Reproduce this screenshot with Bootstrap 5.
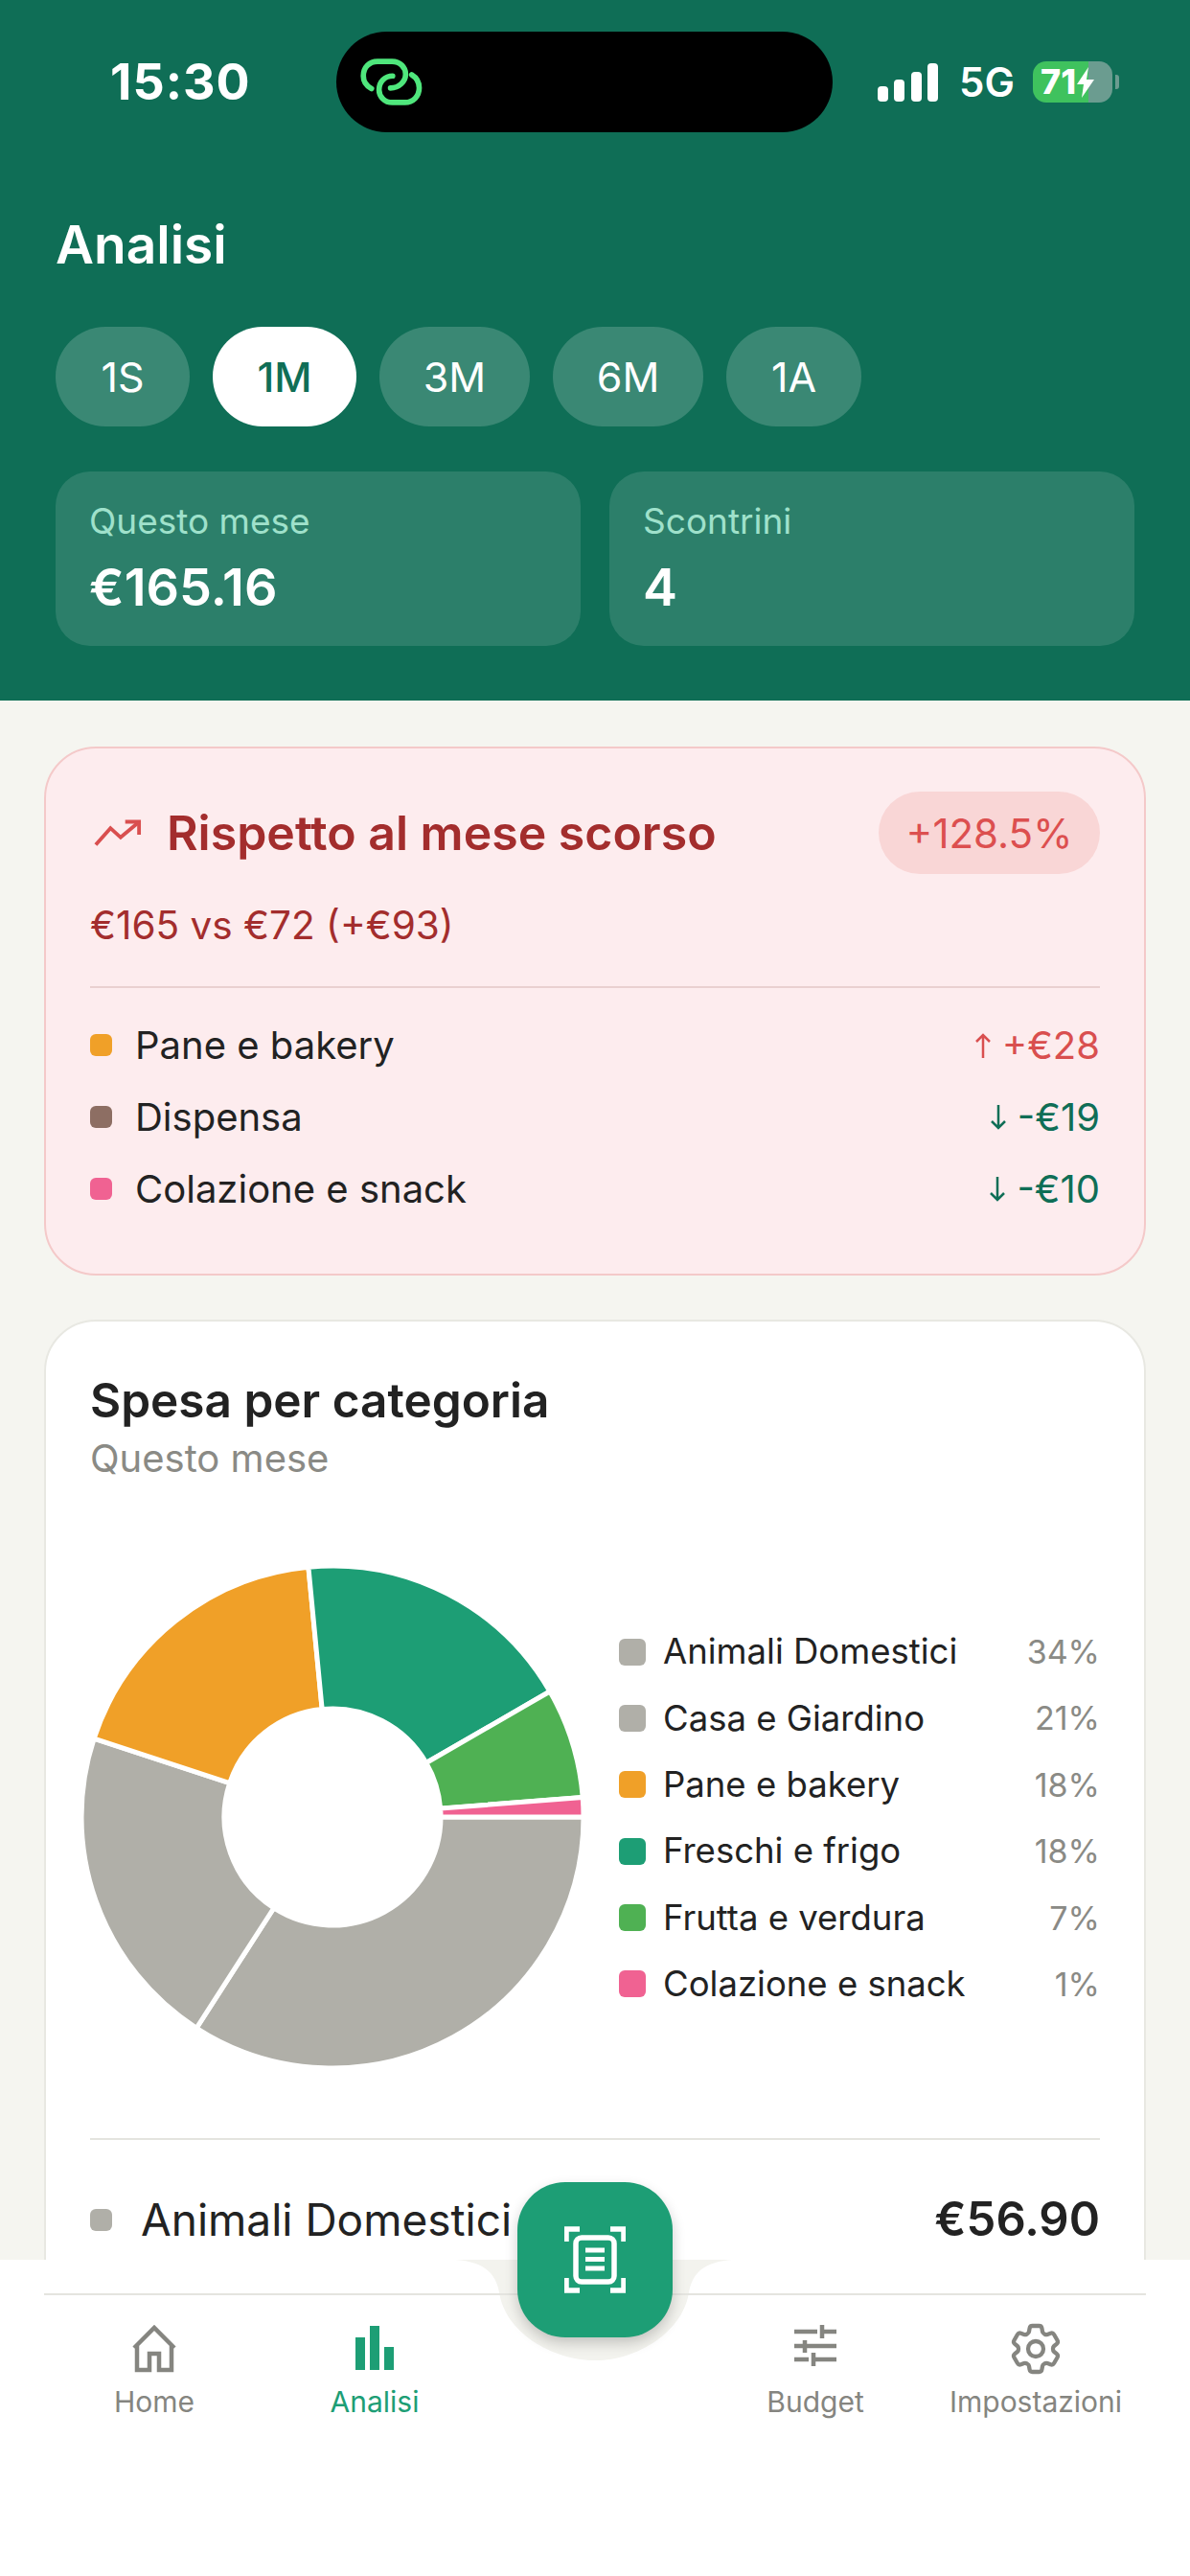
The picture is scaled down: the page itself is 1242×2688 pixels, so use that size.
<!DOCTYPE html>
<html lang="it">
<head>
  <meta charset="UTF-8">
  <meta name="viewport" content="width=device-width, initial-scale=1.0">
  <title>Analisi</title>
  <link href="https://cdn.jsdelivr.net/npm/bootstrap@5.3.0/dist/css/bootstrap.min.css" rel="stylesheet">
  <style>
    html, body { height: 2688px; overflow: hidden; }
    body { font-family: Inter, "Liberation Sans", sans-serif; background: #f5f5f0; color: #222; position: relative; }
    .app-head { background: #0f6e56; height: 731px; padding-top: 33px; color: #fff; }
    .status-row { height: 105px; padding-left: 115px; }
    .status-time { width: 236px; font-size: 52px; font-weight: 700; letter-spacing: 1px; line-height: 1; }
    .island { width: 518px; height: 105px; background: #000; border-radius: 53px; padding-left: 24px; }
    .status-right { padding-left: 47px; }
    .signal { height: 40px; width: 63px; }
    .net-label { font-size: 42px; font-weight: 600; line-height: 1; margin-left: 22px; width: 62px; }
    .battery { width: 83px; height: 43px; border-radius: 14px; margin-left: 15px; font-size: 36px; font-weight: 800; line-height: 43px; padding-left: 8px;
      background: linear-gradient(90deg, #3fc25e 70%, #6b9c90 70%); }
    .battery-nub { width: 4px; height: 15px; background: #6b9c90; border-radius: 0 3px 3px 0; margin-left: 3px; }
    .page-title { font-size: 55px; font-weight: 600; margin: 0; padding: 83px 0 0 58px; line-height: 68px; }
    .chip-row { padding: 52px 0 0 58px; gap: 24px; }
    .chip { height: 104px; border-radius: 52px; background: rgba(255,255,255,.18); color: #fff; font-size: 43px; font-weight: 400; border: 0; padding: 0; }
    .chip-on { background: #fff; color: #0f6e56; font-weight: 500; }
    .stat-row { padding: 47px 58px 0; gap: 30px; }
    .stat-box { flex: 1 1 0; height: 182px; background: rgba(255,255,255,.12); border-radius: 36px; padding: 30px 35px; }
    .stat-label { font-size: 37px; color: #9fe1cb; line-height: 44px; }
    .stat-value { font-size: 54px; font-weight: 600; line-height: 66px; margin-top: 14px; }
    .compare-box { margin: 48px 46px 0; height: 552px; background: #fdecee; border: 2px solid #f4c9c9; border-radius: 54px; padding: 45px 46px; }
    .compare-icon { margin-left: 4px; }
    .compare-title { font-size: 50px; font-weight: 600; color: #a32d2d; line-height: 86px; margin-left: 26px; }
    .compare-pill { height: 86px; width: 231px; border-radius: 43px; background: #f9d6d6; color: #dc4f4f; font-size: 42px; }
    .compare-sub { font-size: 40.500px; color: #a32d2d; line-height: 48px; margin-top: 30px; }
    .compare-rule { border-top: 2px solid #e9d0d0; margin-top: 39px; height: 24px; }
    .cat-row { height: 75px; font-size: 40px; color: #222; }
    .cat-dot { width: 23px; height: 23px; border-radius: 6px; margin-right: 24px; }
    .delta-up { color: #d94f4f; }
    .delta-down { color: #0f6e56; }
    .delta-arrow { margin-right: 12px; }
    .chart-box { margin: 46px 46px 0; background: #fff; border: 2px solid #e8e8e2; border-radius: 54px; padding: 51px 46px 0; height: 1400px; }
    .chart-title { font-size: 49.500px; font-weight: 600; line-height: 62px; margin: 0; }
    .chart-sub { font-size: 40px; color: #8a8a85; line-height: 46px; margin-top: 7px; }
    .donut-row { margin-top: 85px; height: 532px; }
    .donut-svg { width: 532px; height: 532px; margin-left: -13px; flex: none; }
    .legend-col { margin-left: 33px; flex: 1; padding-top: 2px; }
    .legend-row { height: 69.4px; font-size: 36.500px; }
    .legend-dot { width: 28px; height: 28px; border-radius: 6px; margin-right: 18px; }
    .legend-pct { color: #8a8a85; font-size: 34px; }
    .chart-rule { border-top: 2px solid #e4e4df; margin-top: 69px; }
    .top-cat { height: 166px; }
    .top-name { font-size: 46px; margin-left: 30px; }
    .top-amount { font-size: 49px; font-weight: 600; }
    .tab-shell { position: absolute; left: 0; right: 0; top: 2358px; height: 330px; background: #fff; }
    .tab-halo { position: absolute; left: 475px; top: 0; width: 290px; height: 105px; }
    .tab-list { position: absolute; left: 46px; right: 46px; top: 35px; border-top: 2px solid #e4e4df; display: grid; grid-template-columns: repeat(5, 1fr); }
    .tab-item { height: 130px; padding-top: 0; color: #858580; font-size: 30px; line-height: 1; }
    .tab-item svg { height: 64px; width: 64px; margin-top: 24px; margin-bottom: 8px; }
    .tab-on { color: #1d9e75; }
    .scan-btn { position: absolute; left: 540px; top: 2277px; width: 162px; height: 162px; border-radius: 50px; background: #1d9e75; box-shadow: 0 6px 14px rgba(0,0,0,.2); }
  </style>
</head>
<body>
  <header class="app-head">
    <div class="status-row d-flex align-items-center">
      <div class="status-time">15:30</div>
      <div class="island d-flex align-items-center">
        <svg width="68" height="52" viewBox="95 85 215 165" fill="none" stroke="#4fe67c" stroke-width="18" stroke-linecap="round">
          <path d="M135 188C116 178 108 162 108 146C108 118 128 98 155 98H203C230 98 248 118 248 140C248 165 226 186 198 186"/>
          <path d="M268 142C285 152 293 168 293 186C293 214 272 234 246 234H204C178 234 160 214 160 192C160 165 180 146 205 146"/>
        </svg>
      </div>
      <div class="status-right d-flex align-items-center">
        <svg class="signal" viewBox="0 0 63 40" fill="#fff">
          <rect x="0" y="24" width="11" height="16" rx="4"/>
          <rect x="17" y="17" width="11" height="23" rx="4"/>
          <rect x="35" y="9" width="11" height="31" rx="4"/>
          <rect x="52" y="0" width="11" height="40" rx="4"/>
        </svg>
        <div class="net-label">5G</div>
        <div class="battery d-flex align-items-center">71<svg width="20" height="32" viewBox="0 0 20 32" fill="#fff"><path d="M13 0 1 18h7l-2 14L19 13h-8z"/></svg></div>
        <div class="battery-nub"></div>
      </div>
    </div>
    <h1 class="page-title">Analisi</h1>
    <div class="chip-row d-flex">
      <button class="btn chip" style="width:140px">1S</button>
      <button class="btn chip chip-on" style="width:150px">1M</button>
      <button class="btn chip" style="width:157px">3M</button>
      <button class="btn chip" style="width:157px">6M</button>
      <button class="btn chip" style="width:141px">1A</button>
    </div>
    <div class="stat-row d-flex">
      <div class="stat-box">
        <div class="stat-label">Questo mese</div>
        <div class="stat-value">€165.16</div>
      </div>
      <div class="stat-box">
        <div class="stat-label">Scontrini</div>
        <div class="stat-value">4</div>
      </div>
    </div>
  </header>

  <section class="compare-box">
    <div class="d-flex align-items-center">
      <svg class="compare-icon" width="50" height="30" viewBox="0 0 52 30" fill="none" stroke="#d94f4f" stroke-width="4">
        <path d="M2 28 18 10 29 20 48 4"/>
        <path d="M34 3H49V17"/>
      </svg>
      <div class="compare-title flex-grow-1">Rispetto al mese scorso</div>
      <div class="compare-pill d-flex align-items-center justify-content-center">+128.5%</div>
    </div>
    <div class="compare-sub">€165 vs €72 (+€93)</div>
    <div class="compare-rule"></div>
    <div class="cat-row d-flex align-items-center">
      <span class="cat-dot" style="background:#f0a028"></span>
      <span class="flex-grow-1">Pane e bakery</span>
      <svg class="delta-arrow" width="16" height="26" viewBox="0 0 16 26" fill="none" stroke="#d94f4f" stroke-width="2.5"><path d="M8 26V2M1 9l7-7 7 7"/></svg>
      <span class="delta-up">+€28</span>
    </div>
    <div class="cat-row d-flex align-items-center">
      <span class="cat-dot" style="background:#8d6e63"></span>
      <span class="flex-grow-1">Dispensa</span>
      <svg class="delta-arrow" width="16" height="26" viewBox="0 0 16 26" fill="none" stroke="#0f6e56" stroke-width="2.5"><path d="M8 0V24M1 17l7 7 7-7"/></svg>
      <span class="delta-down">-€19</span>
    </div>
    <div class="cat-row d-flex align-items-center">
      <span class="cat-dot" style="background:#f06292"></span>
      <span class="flex-grow-1">Colazione e snack</span>
      <svg class="delta-arrow" width="16" height="26" viewBox="0 0 16 26" fill="none" stroke="#0f6e56" stroke-width="2.5"><path d="M8 0V24M1 17l7 7 7-7"/></svg>
      <span class="delta-down">-€10</span>
    </div>
  </section>

  <section class="chart-box">
    <h2 class="chart-title">Spesa per categoria</h2>
    <div class="chart-sub">Questo mese</div>
    <div class="donut-row d-flex align-items-center">
      <svg class="donut-svg" id="donut" viewBox="-266 -266 532 532"></svg>
      <div class="legend-col">
        <div class="legend-row d-flex align-items-center"><span class="legend-dot" style="background:#b0afa8"></span><span class="flex-grow-1">Animali Domestici</span><span class="legend-pct">34%</span></div>
        <div class="legend-row d-flex align-items-center"><span class="legend-dot" style="background:#b0afa8"></span><span class="flex-grow-1">Casa e Giardino</span><span class="legend-pct">21%</span></div>
        <div class="legend-row d-flex align-items-center"><span class="legend-dot" style="background:#f0a028"></span><span class="flex-grow-1">Pane e bakery</span><span class="legend-pct">18%</span></div>
        <div class="legend-row d-flex align-items-center"><span class="legend-dot" style="background:#1d9e75"></span><span class="flex-grow-1">Freschi e frigo</span><span class="legend-pct">18%</span></div>
        <div class="legend-row d-flex align-items-center"><span class="legend-dot" style="background:#4fb153"></span><span class="flex-grow-1">Frutta e verdura</span><span class="legend-pct">7%</span></div>
        <div class="legend-row d-flex align-items-center"><span class="legend-dot" style="background:#f06292"></span><span class="flex-grow-1">Colazione e snack</span><span class="legend-pct">1%</span></div>
      </div>
    </div>
    <div class="chart-rule"></div>
    <div class="top-cat d-flex align-items-center">
      <span class="cat-dot m-0" style="background:#b0afa8"></span>
      <span class="top-name flex-grow-1">Animali Domestici</span>
      <span class="top-amount">€56.90</span>
    </div>
  </section>

  <nav class="tab-shell">
    <svg class="tab-halo" viewBox="0 0 290 105" fill="#f3f3ee"><path d="M0 0H290C262 2 248 12 244 34C238 75 190 105 147 105C100 105 52 75 46 34C42 12 28 2 0 0Z"/></svg>
    <div class="tab-list">
      <div class="tab-item d-flex flex-column align-items-center">
        <svg viewBox="0 0 64 64" fill="none" stroke="currentColor" stroke-width="4.5"><path d="M14 27V54H27V37H37V54H50V27M11 31 32 10 53 31"/></svg>
        Home
      </div>
      <div class="tab-item tab-on d-flex flex-column align-items-center">
        <svg viewBox="0 0 64 64" fill="currentColor"><rect x="12" y="20" width="10" height="34"/><rect x="27" y="8" width="10" height="46"/><rect x="42" y="30" width="10" height="24"/></svg>
        Analisi
      </div>
      <div></div>
      <div class="tab-item d-flex flex-column align-items-center">
        <svg viewBox="0 0 64 64" fill="none" stroke="currentColor" stroke-width="4.5"><path d="M10 14H34M39 7V21M39 14H54M10 29H19M21 23V36M21 29H54M10 43H25M30 36V50M30 43H54"/></svg>
        Budget
      </div>
      <div class="tab-item d-flex flex-column align-items-center">
        <svg viewBox="0 0 24 24" fill="none" stroke="currentColor" stroke-width="1.6" stroke-linejoin="round"><path d="M9.594 3.94c.09-.542.56-.94 1.11-.94h2.593c.55 0 1.02.398 1.11.94l.213 1.281c.063.374.313.686.645.87.074.04.147.083.22.127.325.196.72.257 1.075.124l1.217-.456a1.125 1.125 0 0 1 1.37.49l1.296 2.247a1.125 1.125 0 0 1-.26 1.431l-1.003.827c-.293.241-.438.613-.43.992a7.723 7.723 0 0 1 0 .255c-.008.378.137.75.43.991l1.004.827c.424.35.534.955.26 1.43l-1.298 2.247a1.125 1.125 0 0 1-1.369.491l-1.217-.456c-.355-.133-.75-.072-1.076.124a6.47 6.47 0 0 1-.22.128c-.331.183-.581.495-.644.869l-.213 1.281c-.09.543-.56.94-1.11.94h-2.594c-.55 0-1.019-.398-1.11-.94l-.213-1.281c-.062-.374-.312-.686-.644-.87a6.52 6.52 0 0 1-.22-.127c-.325-.196-.72-.257-1.076-.124l-1.217.456a1.125 1.125 0 0 1-1.369-.49l-1.297-2.247a1.125 1.125 0 0 1 .26-1.431l1.004-.827c.292-.24.437-.613.43-.991a6.932 6.932 0 0 1 0-.255c.007-.38-.138-.751-.43-.992l-1.004-.827a1.125 1.125 0 0 1-.26-1.43l1.297-2.247a1.125 1.125 0 0 1 1.37-.491l1.216.456c.356.133.751.072 1.076-.124.072-.044.146-.086.22-.128.332-.183.582-.495.644-.869l.214-1.28Z"/><circle cx="12" cy="12" r="3"/></svg>
        Impostazioni
      </div>
    </div>
  </nav>

  <div class="scan-btn d-flex align-items-center justify-content-center">
    <svg width="64" height="70" viewBox="0 0 64 70" fill="none" stroke="#fff" stroke-width="5.5">
      <path d="M2 16V3H16M48 3H62V16M2 54V67H16M48 67H62V54"/>
      <rect x="12" y="12" width="40" height="46" rx="6"/>
      <path d="M22 25H42M22 34.500H42M22 44H42" stroke-width="5"/>
    </svg>
  </div>

  <script>
    // Donut slices, angles clockwise from 3 o'clock
    const slices = [
      [0, 122.8, '#b0afa8'],
      [122.8, 198.2, '#b0afa8'],
      [198.2, 264.5, '#f0a028'],
      [264.5, 330, '#1d9e75'],
      [330, 355.5, '#4fb153'],
      [355.5, 360, '#f06292']
    ];
    const pt = (r, a) => {
      const t = a * Math.PI / 180;
      return `${(r * Math.cos(t)).toFixed(2)} ${(r * Math.sin(t)).toFixed(2)}`;
    };
    document.getElementById('donut').innerHTML = slices.map(([a, b, color]) => {
      const large = b - a > 180 ? 1 : 0;
      return `<path fill="${color}" stroke="#fff" stroke-width="5" d="M${pt(262, a)}A262 262 0 ${large} 1 ${pt(262, b)}L${pt(113, b)}A113 113 0 ${large} 0 ${pt(113, a)}Z"/>`;
    }).join('');
  </script>
  <script src="https://cdn.jsdelivr.net/npm/bootstrap@5.3.0/dist/js/bootstrap.bundle.min.js"></script>
</body>
</html>
